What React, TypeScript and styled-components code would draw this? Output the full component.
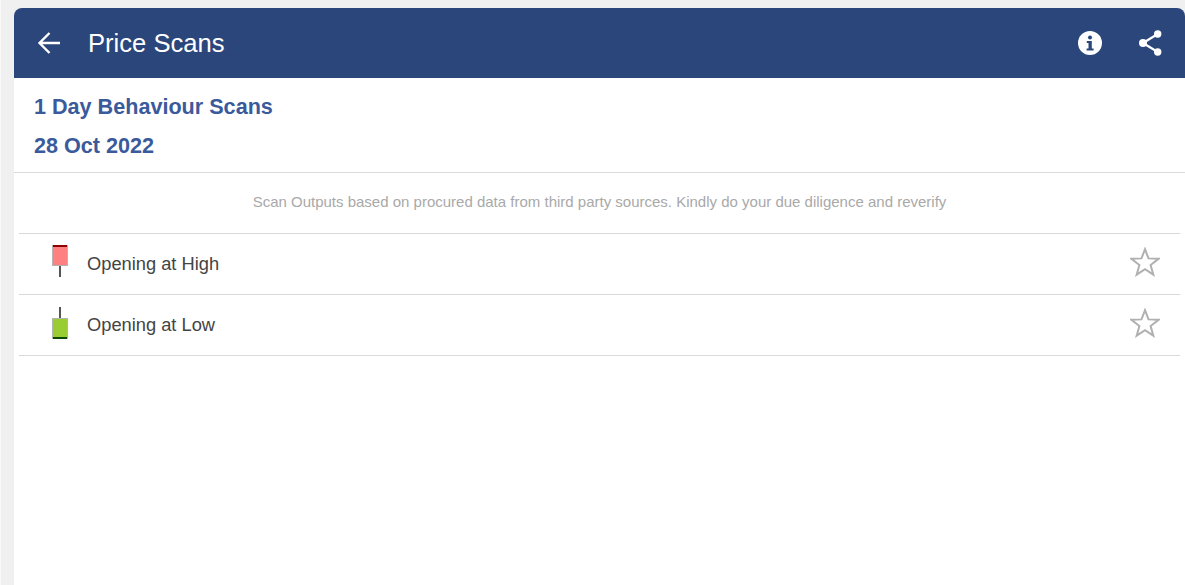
import React from 'react'
import styled, { createGlobalStyle } from 'styled-components'

const GlobalStyle = createGlobalStyle`
  html, body {
    margin: 0;
    padding: 0;
    height: 100%;
    overflow: hidden;
    background: #f0f0f0;
    font-family: "Liberation Sans", Arial, sans-serif;
  }
`

const Page = styled.div`
  height: 585px;
  padding: 8px 0 0 13px;
  box-sizing: border-box;
  background: #f0f0f0;
  border-left: 1px solid #f9f9f9;
`

const Card = styled.main`
  height: 577px;
  background: #ffffff;
  border-radius: 8px 8px 0 0;
  overflow: hidden;
`

const Header = styled.header`
  height: 70px;
  background: #2b467b;
  display: flex;
  align-items: center;
  padding: 0 23px 0 22px;
  color: #ffffff;
`

const BackIcon = styled.svg`
  width: 28px;
  height: 28px;
  flex: none;
`

const Title = styled.h1`
  margin: 0 0 0 24px;
  flex: 1;
  font-size: 25.6px;
  font-weight: 400;
  line-height: 30px;
`

const Actions = styled.div`
  display: flex;
  align-items: center;
  gap: 36px;
`

const Headings = styled.section`
  height: 95px;
  padding: 9px 20px 0;
  box-sizing: border-box;
  border-bottom: 1px solid #d9d9d9;
`

const Heading = styled.h2`
  margin: 0;
  font-size: 21.6px;
  font-weight: 700;
  line-height: 39px;
  color: #3a5a9b;
`

const Disclaimer = styled.p`
  margin: 0;
  height: 60px;
  line-height: 58px;
  text-align: center;
  font-size: 15px;
  color: #a9a9a9;
`

const List = styled.ul`
  list-style: none;
  margin: 0 5px;
  padding: 0;
  border-top: 1px solid #d9d9d9;
`

const Row = styled.li`
  height: 60px;
  display: flex;
  align-items: center;
  padding: 0 20px 0 33px;
  border-bottom: 1px solid #d9d9d9;
`

const RowLabel = styled.span`
  flex: 1;
  margin-left: 19px;
  font-size: 18.3px;
  color: #444444;
`

const CandleIcon = styled.svg<{ $lift: number }>`
  flex: none;
  width: 16px;
  height: 32px;
  margin-bottom: ${({ $lift }) => $lift}px;
`

const StarIcon = styled.svg`
  flex: none;
  width: 30px;
  height: 30px;
  margin-bottom: 4px;
`

const Candle = ({ kind }: { kind: 'high' | 'low' }) => {
  const high = kind === 'high'
  return (
    <CandleIcon viewBox="0 0 16 32" $lift={high ? 6 : 4}>
      <rect x="7" y={high ? 19 : 0} width="2" height="13" fill="#555555" />
      <rect
        x="0.5"
        y={high ? 0.5 : 11.5}
        width="15"
        height="20"
        fill={high ? '#ff8080' : '#9acd32'}
        stroke="#b4b4b4"
      />
      <rect x="1" y={high ? 0 : 30} width="14" height="2" fill={high ? '#8b0000' : '#0b4a00'} />
    </CandleIcon>
  )
}

const Star = () => (
  <StarIcon viewBox="0 0 30 30">
    <path
      d="M15 2.2l3.5 9.2 10 .4-7.9 6.2 2.7 9.6-8.3-5.5-8.3 5.5 2.7-9.6-7.9-6.2 10-.4z"
      fill="none"
      stroke="#b0b0b0"
      strokeWidth="2"
    />
  </StarIcon>
)

const BackArrow = () => (
  <BackIcon viewBox="0 0 28 28">
    <path d="M24 14H4M13.5 4L3.5 14l10 10" fill="none" stroke="#ffffff" strokeWidth="2.4" />
  </BackIcon>
)

const InfoIcon = () => (
  <svg width="24" height="24" viewBox="0 0 24 24">
    <circle cx="12" cy="12" r="12" fill="#ffffff" />
    <circle cx="12" cy="6.4" r="2" fill="#2b467b" />
    <path d="M8.8 10h5v7.4h1.8v2H8.6v-2h1.9v-5.4H8.8z" fill="#2b467b" />
  </svg>
)

const ShareIcon = () => (
  <svg width="24" height="26" viewBox="0 0 24 26">
    <line x1="5" y1="13" x2="19.7" y2="4" stroke="#ffffff" strokeWidth="2.2" />
    <line x1="5" y1="13" x2="19.7" y2="22" stroke="#ffffff" strokeWidth="2.2" />
    <circle cx="5" cy="13" r="4" fill="#ffffff" />
    <circle cx="19.7" cy="4" r="3.7" fill="#ffffff" />
    <circle cx="19.7" cy="22" r="3.7" fill="#ffffff" />
  </svg>
)

const scans: { name: string; kind: 'high' | 'low' }[] = [
  { name: 'Opening at High', kind: 'high' },
  { name: 'Opening at Low', kind: 'low' },
]

const App = () => (
  <Page>
    <GlobalStyle />
    <Card>
      <Header>
        <BackArrow />
        <Title>Price Scans</Title>
        <Actions>
          <InfoIcon />
          <ShareIcon />
        </Actions>
      </Header>
      <Headings>
        <Heading>1 Day Behaviour Scans</Heading>
        <Heading>28 Oct 2022</Heading>
      </Headings>
      <Disclaimer>Scan Outputs based on procured data from third party sources. Kindly do your due diligence and reverify</Disclaimer>
      <List>
        {scans.map((scan) => (
          <Row key={scan.name}>
            <Candle kind={scan.kind} />
            <RowLabel>{scan.name}</RowLabel>
            <Star />
          </Row>
        ))}
      </List>
    </Card>
  </Page>
)

export default App
